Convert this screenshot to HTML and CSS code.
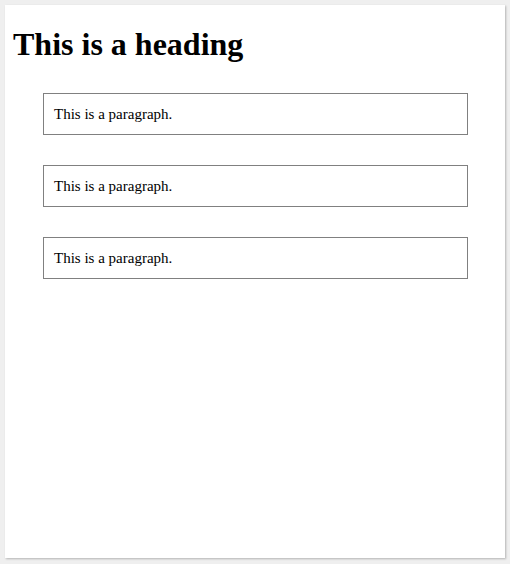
FILE: index.html
```html
<!DOCTYPE html>
<html>
<head>
<meta charset="utf-8">
<link rel="stylesheet" href="styles.css">
</head>
<body>
<div class="page">
  <h1 class="title">This is a heading</h1>
  <p class="box">This is a paragraph.</p>
  <p class="box">This is a paragraph.</p>
  <p class="box">This is a paragraph.</p>
</div>
</body>
</html>
```
FILE: styles.css
```css
html, body {
  margin: 0;
  padding: 0;
  background: #efefef;
}
body {
  padding: 5px;
  font-family: "Liberation Serif", "Times New Roman", serif;
  color: #000;
}
.page {
  background: #fff;
  width: 500px;
  height: 553px;
  box-sizing: border-box;
  padding: 8px;
  box-shadow: 1px 1px 2px rgba(0,0,0,0.25);
  display: flow-root;
}
.title {
  font-size: 32px;
  font-weight: bold;
  margin: 13px 0 0 0;
  line-height: 37px;
}
.box {
  font-size: 15px;
  margin: 30px 29px 0 30px;
  padding: 11px 10px 11px 10px;
  border: 1px solid #808080;
  line-height: 18px;
}
```
